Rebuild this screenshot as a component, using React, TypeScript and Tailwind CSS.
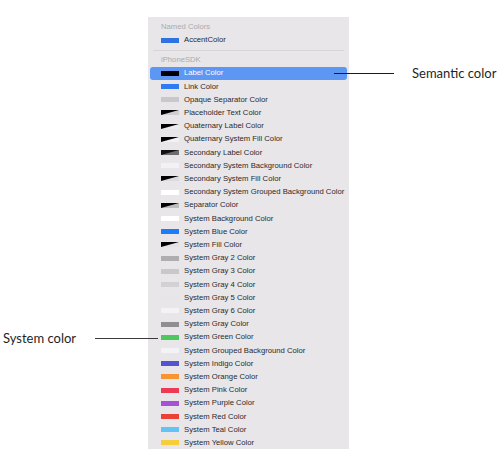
import React from "react"

type Swatch = { name: string; fill: string; alpha?: string }

const named: Swatch[] = [{ name: "AccentColor", fill: "#2f73e0" }]

const sdk: Swatch[] = [
  { name: "Label Color", fill: "#000000" },
  { name: "Link Color", fill: "#2f7cf2" },
  { name: "Opaque Separator Color", fill: "#c8c8ca" },
  { name: "Placeholder Text Color", fill: "#000000", alpha: "#cfcfd2" },
  { name: "Quaternary Label Color", fill: "#000000", alpha: "#ececee" },
  { name: "Quaternary System Fill Color", fill: "#000000", alpha: "#f2f2f4" },
  { name: "Secondary Label Color", fill: "#111111", alpha: "#6e6e72" },
  { name: "Secondary System Background Color", fill: "#f2f2f6" },
  { name: "Secondary System Fill Color", fill: "#000000", alpha: "#dcdce0" },
  { name: "Secondary System Grouped Background Color", fill: "#ffffff" },
  { name: "Separator Color", fill: "#000000", alpha: "#bdbdc0" },
  { name: "System Background Color", fill: "#ffffff" },
  { name: "System Blue Color", fill: "#1f7bf6" },
  { name: "System Fill Color", fill: "#000000", alpha: "#e2e2e5" },
  { name: "System Gray 2 Color", fill: "#aeaeb2" },
  { name: "System Gray 3 Color", fill: "#c7c7cc" },
  { name: "System Gray 4 Color", fill: "#d1d1d6" },
  { name: "System Gray 5 Color", fill: "#e5e5ea" },
  { name: "System Gray 6 Color", fill: "#f3f3f7" },
  { name: "System Gray Color", fill: "#8e8e93" },
  { name: "System Green Color", fill: "#4cc85e" },
  { name: "System Grouped Background Color", fill: "#f2f2f7" },
  { name: "System Indigo Color", fill: "#5552d0" },
  { name: "System Orange Color", fill: "#f99530" },
  { name: "System Pink Color", fill: "#ec3a55" },
  { name: "System Purple Color", fill: "#a652d8" },
  { name: "System Red Color", fill: "#ec4136" },
  { name: "System Teal Color", fill: "#64c3f5" },
  { name: "System Yellow Color", fill: "#f8cd3c" },
]

// colours with transparency are split on the diagonal: opaque on top-left, with alpha below
function Chip({ fill, alpha }: { fill: string; alpha?: string }) {
  return (
    <svg width="18" height="5" viewBox="0 0 18 5" className="shrink-0 block">
      <rect width="18" height="5" fill={alpha ?? fill} />
      {alpha && <polygon points="0,0 18,0 0,5" fill={fill} />}
    </svg>
  )
}

function Row({ item, selected }: { item: Swatch; selected?: boolean }) {
  return (
    <div
      className={`mx-[2px] h-[13.21px] pl-[11px] flex items-center gap-[5px] rounded-[3px] ${
        selected ? "bg-[#5b97f3] text-white" : "text-[#2a2a2c]"
      }`}
    >
      <Chip fill={item.fill} alpha={item.alpha} />
      <span className="text-[7.7px] leading-none whitespace-nowrap">{item.name}</span>
    </div>
  )
}

function Header({ label }: { label: string }) {
  return (
    <div className="mx-[2px] h-[13.21px] pl-[11px] flex items-center text-[7.7px] leading-none text-[#ababad]">
      {label}
    </div>
  )
}

export default function App() {
  return (
    <div
      className="w-[500px] h-[453px] bg-white overflow-hidden pt-[17px] flex items-start"
      style={{ fontFamily: '"Liberation Sans", Arial, sans-serif' }}
    >
      {/* left callout */}
      <div className="w-[148px] shrink-0 mt-[315px] h-[13px] pl-[3px] flex items-center">
        <span className="text-[13px] leading-none text-[#1f1f1f]" style={{ fontFamily: "Lato, sans-serif" }}>
          System color
        </span>
        <div className="ml-auto -mr-[10px] relative z-10 w-[63px] h-px bg-[#3a3a3a]" />
      </div>

      <div className="w-[201px] h-[432px] shrink-0 bg-[#e8e6e8] pt-[3.4px]">
        <Header label="Named Colors" />
        {named.map((c) => (
          <Row key={c.name} item={c} />
        ))}
        <div className="h-[6.6px] flex items-center px-[5px]">
          <div className="h-px w-full bg-[#d6d4d6]" />
        </div>
        <Header label="iPhoneSDK" />
        {sdk.map((c, i) => (
          <Row key={c.name} item={c} selected={i === 0} />
        ))}
      </div>

      {/* right callout */}
      <div className="mt-[50px] h-[13px] flex items-center gap-[18px]">
        <div className="-ml-[15px] relative z-10 w-[60px] h-px bg-[#1a1a1a]" />
        <span className="text-[13px] leading-none text-[#1f1f1f] whitespace-nowrap" style={{ fontFamily: "Lato, sans-serif" }}>
          Semantic color
        </span>
      </div>
    </div>
  )
}
